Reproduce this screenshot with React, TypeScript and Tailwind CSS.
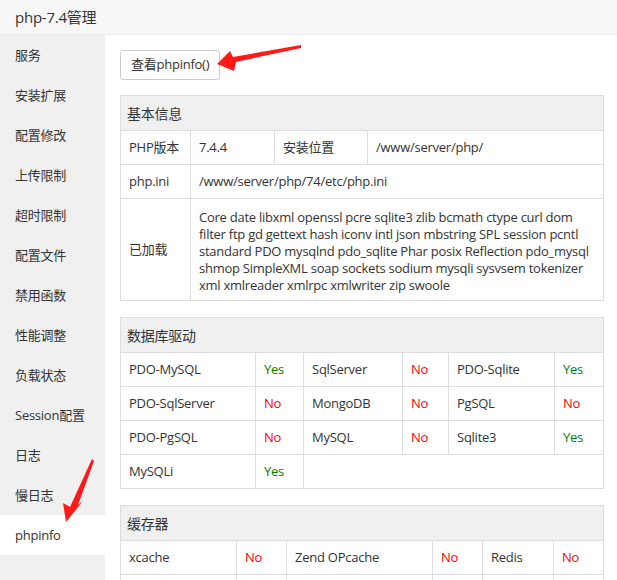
const menu = [
  "服务",
  "安装扩展",
  "配置修改",
  "上传限制",
  "超时限制",
  "配置文件",
  "禁用函数",
  "性能调整",
  "负载状态",
  "Session配置",
  "日志",
  "慢日志",
  "phpinfo",
];

const loaded =
  "Core date libxml openssl pcre sqlite3 zlib bcmath ctype curl dom filter ftp gd gettext hash iconv intl json mbstring SPL session pcntl standard PDO mysqlnd pdo_sqlite Phar posix Reflection pdo_mysql shmop SimpleXML soap sockets sodium mysqli sysvsem tokenizer xml xmlreader xmlrpc xmlwriter zip swoole";

type Flag = [string, boolean];

const dbRows: Flag[][] = [
  [["PDO-MySQL", true], ["SqlServer", false], ["PDO-Sqlite", true]],
  [["PDO-SqlServer", false], ["MongoDB", false], ["PgSQL", false]],
  [["PDO-PgSQL", false], ["MySQL", false], ["Sqlite3", true]],
];

const cacheRow: Flag[] = [
  ["xcache", false],
  ["Zend OPcache", false],
  ["Redis", false],
];

function Status({ ok }: { ok: boolean }) {
  return ok ? (
    <span className="text-[#008000]">Yes</span>
  ) : (
    <span className="text-[#ff0000]">No</span>
  );
}

const td = "border border-[#ddd] px-2 h-[34px] align-middle";

function Section({ title, cols, children }: { title: string; cols: number[]; children: React.ReactNode }) {
  return (
    <table className="w-[483px] table-fixed border-collapse mb-4">
      <colgroup>
        {cols.map((w, i) => (
          <col key={i} style={{ width: w }} />
        ))}
      </colgroup>
      <thead>
        <tr>
          <th
            colSpan={cols.length}
            className="border border-[#ddd] bg-[#f0f0f0] h-[35px] px-[6px] text-left font-normal text-[14px]"
          >
            {title}
          </th>
        </tr>
      </thead>
      <tbody>{children}</tbody>
    </table>
  );
}

export default function App() {
  return (
    <div
      className="relative w-[617px] h-[580px] overflow-hidden bg-white text-[13px] text-[#333] tracking-[-0.25px]"
      style={{ fontFamily: '"Open Sans", "Noto Sans CJK SC", sans-serif' }}
    >
      <div className="h-[35px] bg-[#f7f7f7] border-b border-[#ececec] pl-[15px] flex items-center text-[15px]">
        php-7.4管理
      </div>
      <div className="flex h-[545px]">
        <ul className="w-[105px] bg-[#f0f0f0] shrink-0">
          {menu.map((m) => (
            <li
              key={m}
              className={`h-[40px] flex items-center pl-[15px] pt-px ${m === "phpinfo" ? "bg-white" : ""}`}
            >
              {m}
            </li>
          ))}
        </ul>
        <div className="pt-[15px] pl-[15px]">
          <button className="h-[30px] px-[10px] border border-[#ccc] rounded-[3px] bg-white text-[13px] text-[#333] mb-[15px]">
            查看phpinfo()
          </button>

          <Section title="基本信息" cols={[70, 84, 93, 236]}>
            <tr>
              <td className={td}>PHP版本</td>
              <td className={td}>7.4.4</td>
              <td className={td}>安装位置</td>
              <td className={td}>/www/server/php/</td>
            </tr>
            <tr>
              <td className={td}>php.ini</td>
              <td className={td} colSpan={3}>
                /www/server/php/74/etc/php.ini
              </td>
            </tr>
            <tr>
              <td className={td}>已加载</td>
              <td className="border border-[#ddd] px-2 pt-[10px] pb-[6px] leading-[17px]" colSpan={3}>
                {loaded}
              </td>
            </tr>
          </Section>

          <Section title="数据库驱动" cols={[135, 48, 99, 46, 106, 49]}>
            {dbRows.map((row, i) => (
              <tr key={i}>
                {row.map(([name, ok]) => (
                  <>
                    <td key={name} className={td}>{name}</td>
                    <td key={name + "-s"} className={td}>
                      <Status ok={ok} />
                    </td>
                  </>
                ))}
              </tr>
            ))}
            <tr>
              <td className={td}>MySQLi</td>
              <td className={td}>
                <Status ok />
              </td>
              <td className={td} colSpan={4}></td>
            </tr>
          </Section>

          <Section title="缓存器" cols={[116, 50, 146, 50, 71, 50]}>
            <tr>
              {cacheRow.map(([name, ok]) => (
                <>
                  <td key={name} className={td}>{name}</td>
                  <td key={name + "-s"} className={td}>
                    <Status ok={ok} />
                  </td>
                </>
              ))}
            </tr>
            <tr>
              <td className={td}></td>
              <td className={td}></td>
              <td className={td}></td>
              <td className={td}></td>
              <td className={td}></td>
              <td className={td}></td>
            </tr>
          </Section>
        </div>
      </div>

      {/* annotation arrows */}
      <svg className="absolute left-0 top-0 pointer-events-none" width="617" height="580">
        <polygon
          fill="#ff1a1a"
          points="217,64 230,51 233,57 301,45 301,48 236,62 234,71"
        />
        <polygon
          fill="#ff1a1a"
          points="66,522 63,503 70,507 92,459 94,461 78,505 83,501"
        />
      </svg>
    </div>
  );
}
